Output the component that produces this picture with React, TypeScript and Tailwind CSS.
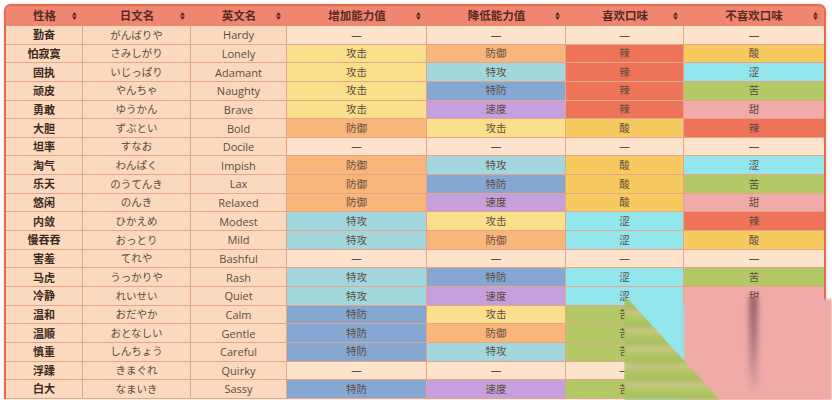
const statBg: Record<string, string> = {
  攻击: "bg-[#fbe08c]",
  防御: "bg-[#f8b67a]",
  特攻: "bg-[#a2d7dd]",
  特防: "bg-[#86a7d2]",
  速度: "bg-[#c6a0dc]",
  "—": "bg-[#fde2cc]",
};

const tasteBg: Record<string, string> = {
  辣: "bg-[#ee7459]",
  酸: "bg-[#f6ca5e]",
  涩: "bg-[#92e6ec]",
  苦: "bg-[#b4c866]",
  甜: "bg-[#f0aaa8]",
  "—": "bg-[#fde2cc]",
};

const natures = [
  ["勤奋", "がんばりや", "Hardy", "—", "—", "—", "—"],
  ["怕寂寞", "さみしがり", "Lonely", "攻击", "防御", "辣", "酸"],
  ["固执", "いじっぱり", "Adamant", "攻击", "特攻", "辣", "涩"],
  ["顽皮", "やんちゃ", "Naughty", "攻击", "特防", "辣", "苦"],
  ["勇敢", "ゆうかん", "Brave", "攻击", "速度", "辣", "甜"],
  ["大胆", "ずぶとい", "Bold", "防御", "攻击", "酸", "辣"],
  ["坦率", "すなお", "Docile", "—", "—", "—", "—"],
  ["淘气", "わんぱく", "Impish", "防御", "特攻", "酸", "涩"],
  ["乐天", "のうてんき", "Lax", "防御", "特防", "酸", "苦"],
  ["悠闲", "のんき", "Relaxed", "防御", "速度", "酸", "甜"],
  ["内敛", "ひかえめ", "Modest", "特攻", "攻击", "涩", "辣"],
  ["慢吞吞", "おっとり", "Mild", "特攻", "防御", "涩", "酸"],
  ["害羞", "てれや", "Bashful", "—", "—", "—", "—"],
  ["马虎", "うっかりや", "Rash", "特攻", "特防", "涩", "苦"],
  ["冷静", "れいせい", "Quiet", "特攻", "速度", "涩", "甜"],
  ["温和", "おだやか", "Calm", "特防", "攻击", "苦", "辣"],
  ["温顺", "おとなしい", "Gentle", "特防", "防御", "苦", "酸"],
  ["慎重", "しんちょう", "Careful", "特防", "特攻", "苦", "涩"],
  ["浮躁", "きまぐれ", "Quirky", "—", "—", "—", "—"],
  ["白大", "なまいき", "Sassy", "特防", "速度", "苦", "甜"],
];

const headers = ["性格", "日文名", "英文名", "增加能力值", "降低能力值", "喜欢口味", "不喜欢口味"];

const cols = "grid grid-cols-[77px_108px_96px_140px_139px_118px_140px]";

function SortIcon() {
  return (
    <svg width="5" height="8" viewBox="0 0 5 8" className="absolute right-[6px] top-[6px]">
      <path d="M2.5 0 L5 3.4 L0 3.4 Z" fill="#5b2a22" />
      <path d="M2.5 8 L5 4.6 L0 4.6 Z" fill="#5b2a22" />
    </svg>
  );
}

function Cell({ text, className }: { text: string; className: string }) {
  return (
    <div
      className={`flex items-center justify-center border-r border-b border-[#e4a68a] last:border-r-0 ${className}`}
    >
      {text}
    </div>
  );
}

export default function App() {
  return (
    <div
      className="relative h-[400px] w-[832px] overflow-hidden bg-white"
      style={{ fontFamily: '"Open Sans", "Noto Sans CJK SC", sans-serif' }}
    >
      <div className="ml-[4px] mt-[4px] w-[822px] overflow-hidden rounded-t-[7px] border-2 border-b-0 border-[#e46a56] bg-[#fbd9be] shadow-[0_0_3px_rgba(200,90,70,0.35)]">
        <div className={`${cols} h-[20px] bg-[#ef8670]`}>
          {headers.map((h) => (
            <div
              key={h}
              className="relative flex items-center justify-center text-[11.5px] font-bold text-[#5b2a22]"
            >
              {h}
              <SortIcon />
            </div>
          ))}
        </div>
        {natures.map((n) => (
          <div key={n[0]} className={`${cols} h-[18.65px] text-[10.5px] leading-none text-[#5e4c42]`}>
            <Cell text={n[0]} className="text-[11px] font-bold text-[#3b2a22]" />
            <Cell text={n[1]} className="" />
            <Cell text={n[2]} className="text-[11px]" />
            <Cell text={n[3]} className={statBg[n[3]]} />
            <Cell text={n[4]} className={statBg[n[4]]} />
            <Cell text={n[5]} className={tasteBg[n[5]]} />
            <Cell text={n[6]} className={tasteBg[n[6]]} />
          </div>
        ))}
      </div>

      {/* smeared page-curl artefact over the bottom-right corner */}
      <div className="pointer-events-none absolute left-[626px] top-[305px] h-[95px] w-[206px]">
        <div className="absolute left-0 top-0 h-full w-[60px] bg-[#92e6ec]" />
        <div className="absolute left-[58px] top-[-6px] h-[101px] w-[148px] bg-[#f0aaa8] blur-[1px]" />
        <div className="absolute left-[124px] top-[-8px] h-[100px] w-[7px] bg-[linear-gradient(180deg,#7a4a55_0%,#a0707a_45%,rgba(240,170,168,0)_100%)] blur-[3px]" />
        <div className="absolute left-[-2px] top-[-6px] h-[101px] w-[100px] bg-[repeating-linear-gradient(180deg,#b4c866_0px,#a8bd5c_8px,#c9c486_13px,#b4c866_18px)] blur-[1.5px] [clip-path:polygon(0_0,4px_0,96px_101px,0_101px)]" />
      </div>
    </div>
  );
}
